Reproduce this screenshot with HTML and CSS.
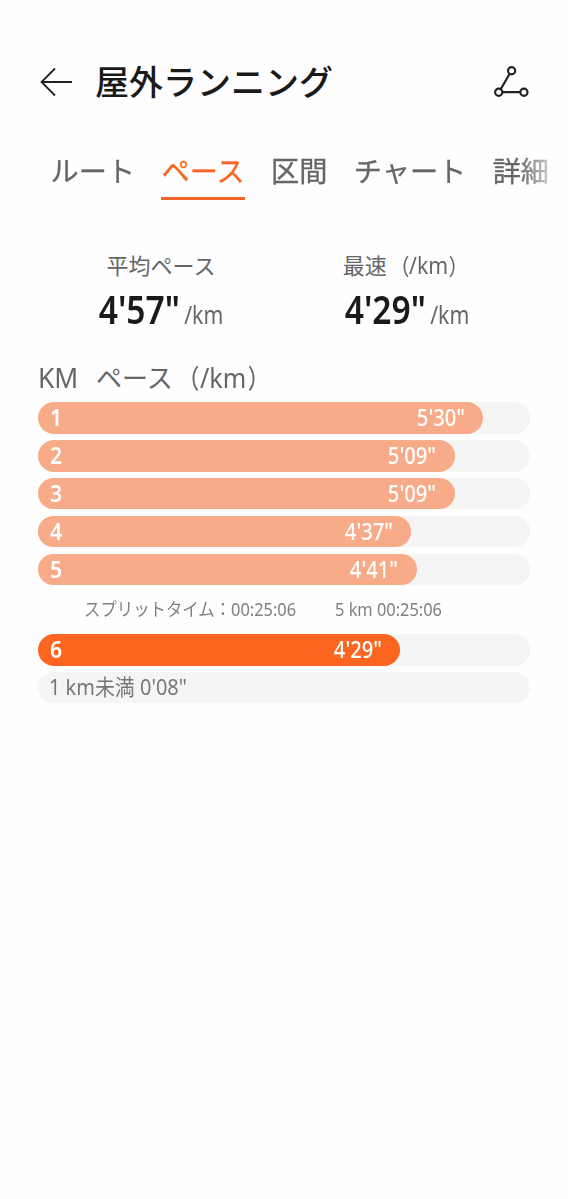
FILE: index.html
```html
<!DOCTYPE html>
<html lang="ja">
<head>
    <meta charset="UTF-8">
    <meta name="viewport" content="width=device-width, initial-scale=1.0">
    <title>屋外ランニング</title>
    <link rel="stylesheet" href="styles.css">
</head>
<body>
    <header class="header">
        <svg class="back-icon" width="34" height="32" viewBox="0 0 34 32">
            <path d="M33 16H2.500M16 2.500L2.500 16l13.500 13.500"/>
        </svg>
        <h1>屋外ランニング</h1>
        <svg class="track-icon" width="38" height="34" viewBox="0 0 38 34">
            <path d="M16.500 9L8 23.700M9.500 27.200h17.500"/>
            <circle cx="18.600" cy="5.700" r="3.600"/>
            <circle cx="5.700" cy="27.200" r="3.600"/>
            <circle cx="30.900" cy="27.200" r="3.600"/>
        </svg>
    </header>

    <nav class="tabs">
        <a class="tab">ルート</a>
        <a class="tab active">ペース</a>
        <a class="tab">区間</a>
        <a class="tab">チャート</a>
        <a class="tab">詳細</a>
    </nav>

    <main class="content">
        <div class="stats">
            <div class="stat">
                <div class="stat-label">平均ペース</div>
                <div class="stat-value">4'57"<span class="unit">/km</span></div>
            </div>
            <div class="stat">
                <div class="stat-label">最速<span class="open">（</span><span class="per-km">/km</span><span class="close">）</span></div>
                <div class="stat-value">4'29"<span class="unit">/km</span></div>
            </div>
        </div>

        <div class="list-head"><span class="km">KM</span><span>ペース<span class="open">（</span><span class="per-km">/km</span><span class="close">）</span></span></div>

        <div class="laps">
            <div class="lap"><div class="bar" style="width: 445px"><span>1</span><span>5'30"</span></div></div>
            <div class="lap"><div class="bar" style="width: 416.500px"><span>2</span><span>5'09"</span></div></div>
            <div class="lap"><div class="bar" style="width: 416.500px"><span>3</span><span>5'09"</span></div></div>
            <div class="lap"><div class="bar" style="width: 373px"><span>4</span><span>4'37"</span></div></div>
            <div class="lap"><div class="bar" style="width: 378.500px"><span>5</span><span>4'41"</span></div></div>
            <div class="split"><span class="split-time">スプリットタイム：00:25:06</span><span>5 km 00:25:06</span></div>
            <div class="lap"><div class="bar fastest" style="width: 362px"><span>6</span><span>4'29"</span></div></div>
            <div class="lap rest"><span>1 km未満 0'08"</span></div>
        </div>
    </main>
</body>
</html>
```
FILE: styles.css
```css
* {
    box-sizing: border-box;
}
body {
    margin: 0;
    background-color: #fefefe;
    color: #666;
    font-family: "Noto Sans", "Noto Sans CJK JP", sans-serif;
}
.header {
    display: flex;
    align-items: center;
    height: 64px;
    margin-top: 50px;
    padding: 0 37px 0 39px;
}
.header svg {
    fill: none;
    stroke: #222;
    stroke-width: 1.8;
}
h1 {
    flex: 1;
    margin: 0 0 0 22px;
    font-size: 34px;
    line-height: 65px;
    font-weight: 500;
    color: #1a1a1a;
}
.header .track-icon {
    stroke-width: 2.2;
}
.tabs {
    display: flex;
    gap: 26.4px;
    height: 58px;
    margin: 29px 20px 0 0;
    padding-left: 50.500px;
    overflow: hidden;
    white-space: nowrap;
    -webkit-mask-image: linear-gradient(to left, rgba(0,0,0,0.35), #000 28px);
    mask-image: linear-gradient(to left, rgba(0,0,0,0.35), #000 28px);
}
.tab {
    flex: none;
    height: 57px;
    font-size: 28.2px;
    line-height: 57px;
    font-weight: 400;
    -webkit-text-stroke: 0.3px;
}
.tab.active {
    color: #fb6522;
    background: linear-gradient(#f06428, #f06428) left bottom / 100% 3px no-repeat;
}
.content {
    padding: 0 38px;
}
.stats {
    display: flex;
    padding-top: 48px;
}
.stat {
    flex: 1;
    text-align: center;
}
.stat-label {
    font-size: 22px;
    line-height: 32px;
}
/* numbers and latin text are set slightly condensed */
.per-km {
    display: inline-block;
    margin-right: -0.08em;
    font-size: 1.05em;
    transform: scaleX(0.92);
    transform-origin: left;
}
.open, .close {
    display: inline-block;
    transform: scaleX(0.8);
    transform-origin: right;
    -webkit-text-stroke: 0.3px;
}
.close {
    transform-origin: left;
}
.list-head .per-km {
    margin-left: 1px;
}
.stat-value {
    font-size: 39.500px;
    line-height: 56px;
    font-weight: 600;
    color: #1a1a1a;
    transform: scaleX(0.85);
}
.unit {
    margin-left: 5px;
    font-size: 25px;
    font-weight: 400;
    color: #666;
}
.list-head {
    display: flex;
    margin-top: 18px;
    font-size: 26px;
    line-height: 36px;
}
.km {
    width: 58px;
    font-size: 27.500px;
    transform: scaleX(0.96);
    transform-origin: left;
}
.laps {
    display: grid;
    row-gap: 6.3px;
    margin-top: 6.4px;
}
.lap {
    height: 31.500px;
    border-radius: 16px;
    background-color: #f5f5f5;
}
.bar {
    display: flex;
    justify-content: space-between;
    height: 100%;
    padding: 0 18.500px 0 12px;
    border-radius: 16px;
    background-color: #f8ab89;
    color: #fff;
    font-size: 23.500px;
    line-height: 31px;
    font-weight: 500;
}
.bar span {
    transform: scaleX(0.86);
    transform-origin: right;
}
.bar span:first-child {
    font-weight: 600;
    transform: scaleX(0.9);
    transform-origin: left;
}
.bar.fastest {
    background-color: #fc6621;
}
.split {
    display: flex;
    height: 36.4px;
    padding-left: 46px;
    font-size: 18px;
    line-height: 36px;
    color: #808080;
}
.split span {
    transform: scaleX(0.91);
    transform-origin: left;
}
.split-time {
    width: 251px;
}
.rest {
    padding-left: 11px;
    font-size: 22px;
    line-height: 29px;
    color: #777;
}
.rest span {
    display: inline-block;
    transform: scaleX(0.907);
    transform-origin: left;
}
```
